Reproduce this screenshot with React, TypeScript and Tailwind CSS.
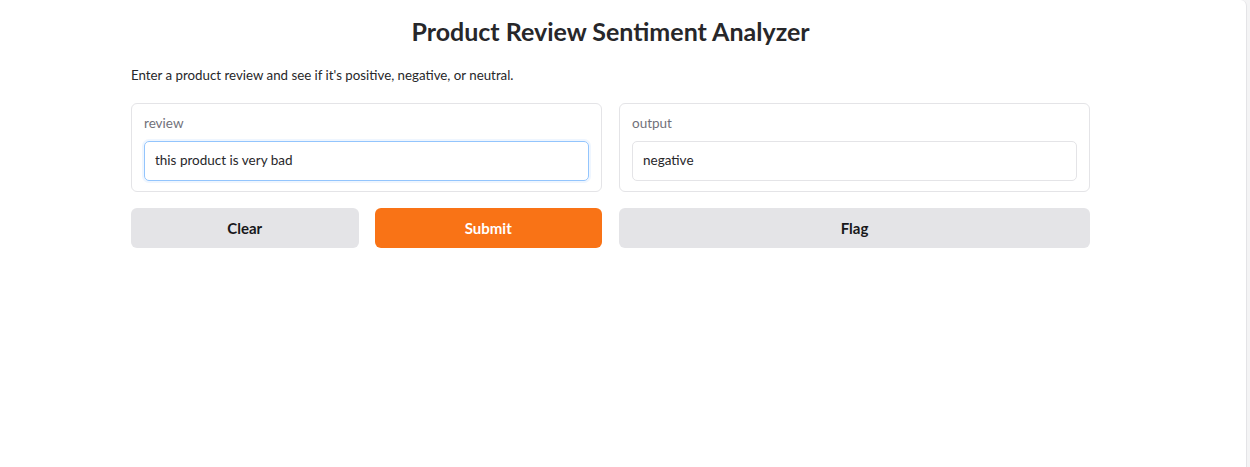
import { useState } from 'react';

export default function App() {
  const [review, setReview] = useState('this product is very bad');
  const [output, setOutput] = useState('negative');

  return (
    <div className="flex h-[467px] w-[1250px] bg-[#f4f4f5]" style={{ fontFamily: 'Lato, "Noto Sans", sans-serif' }}>
      <div className="h-full w-[1247px] bg-white border-r border-[#e4e4e7] rounded-tr-[6px]">
        <div className="ml-[131px] w-[959px] flex flex-col">
          {/* Title */}
          <h1 className="mt-[15px] text-center text-[25px] leading-[32px] font-bold text-[#27272a]">
            Product Review Sentiment Analyzer
          </h1>
          <p className="mt-[19px] text-[13.3px] leading-[18px] text-[#27272a]">
            Enter a product review and see if it's positive, negative, or neutral.
          </p>

          {/* Input / output panels */}
          <div className="mt-[19px] grid grid-cols-2 gap-[17px]">
            <div className="flex flex-col rounded-[6px] border border-[#e4e4e7] px-[12px] pt-[11px] pb-[10px]">
              <label className="text-[13.5px] leading-[16px] text-[#71717a]">review</label>
              <input
                value={review}
                onChange={(e) => setReview(e.target.value)}
                className="mt-[10px] h-[40px] rounded-[5px] border border-[#93c5fd] px-[10px] pb-[2px] text-[13.5px] text-[#27272a] outline-none shadow-[0_0_0_2px_#eff6ff]"
              />
            </div>
            <div className="flex flex-col rounded-[6px] border border-[#e4e4e7] px-[12px] pt-[11px] pb-[10px]">
              <label className="text-[13.5px] leading-[16px] text-[#71717a]">output</label>
              <div className="mt-[10px] flex h-[40px] items-center rounded-[5px] border border-[#e4e4e7] px-[10px] pb-[2px] text-[13.5px] text-[#27272a]">
                {output}
              </div>
            </div>
          </div>

          {/* Buttons */}
          <div className="mt-[16px] grid grid-cols-2 gap-[17px]">
            <div className="grid grid-cols-2 gap-[16px]">
              <button
                onClick={() => { setReview(''); setOutput(''); }}
                className="h-[40px] rounded-[6px] bg-[#e4e4e7] text-[15px] font-bold text-[#18181b]"
              >
                Clear
              </button>
              <button className="h-[40px] rounded-[6px] bg-[#f97316] text-[15px] font-bold text-white">
                Submit
              </button>
            </div>
            <button className="h-[40px] rounded-[6px] bg-[#e4e4e7] text-[15px] font-bold text-[#18181b]">
              Flag
            </button>
          </div>
        </div>
      </div>
    </div>
  );
}
